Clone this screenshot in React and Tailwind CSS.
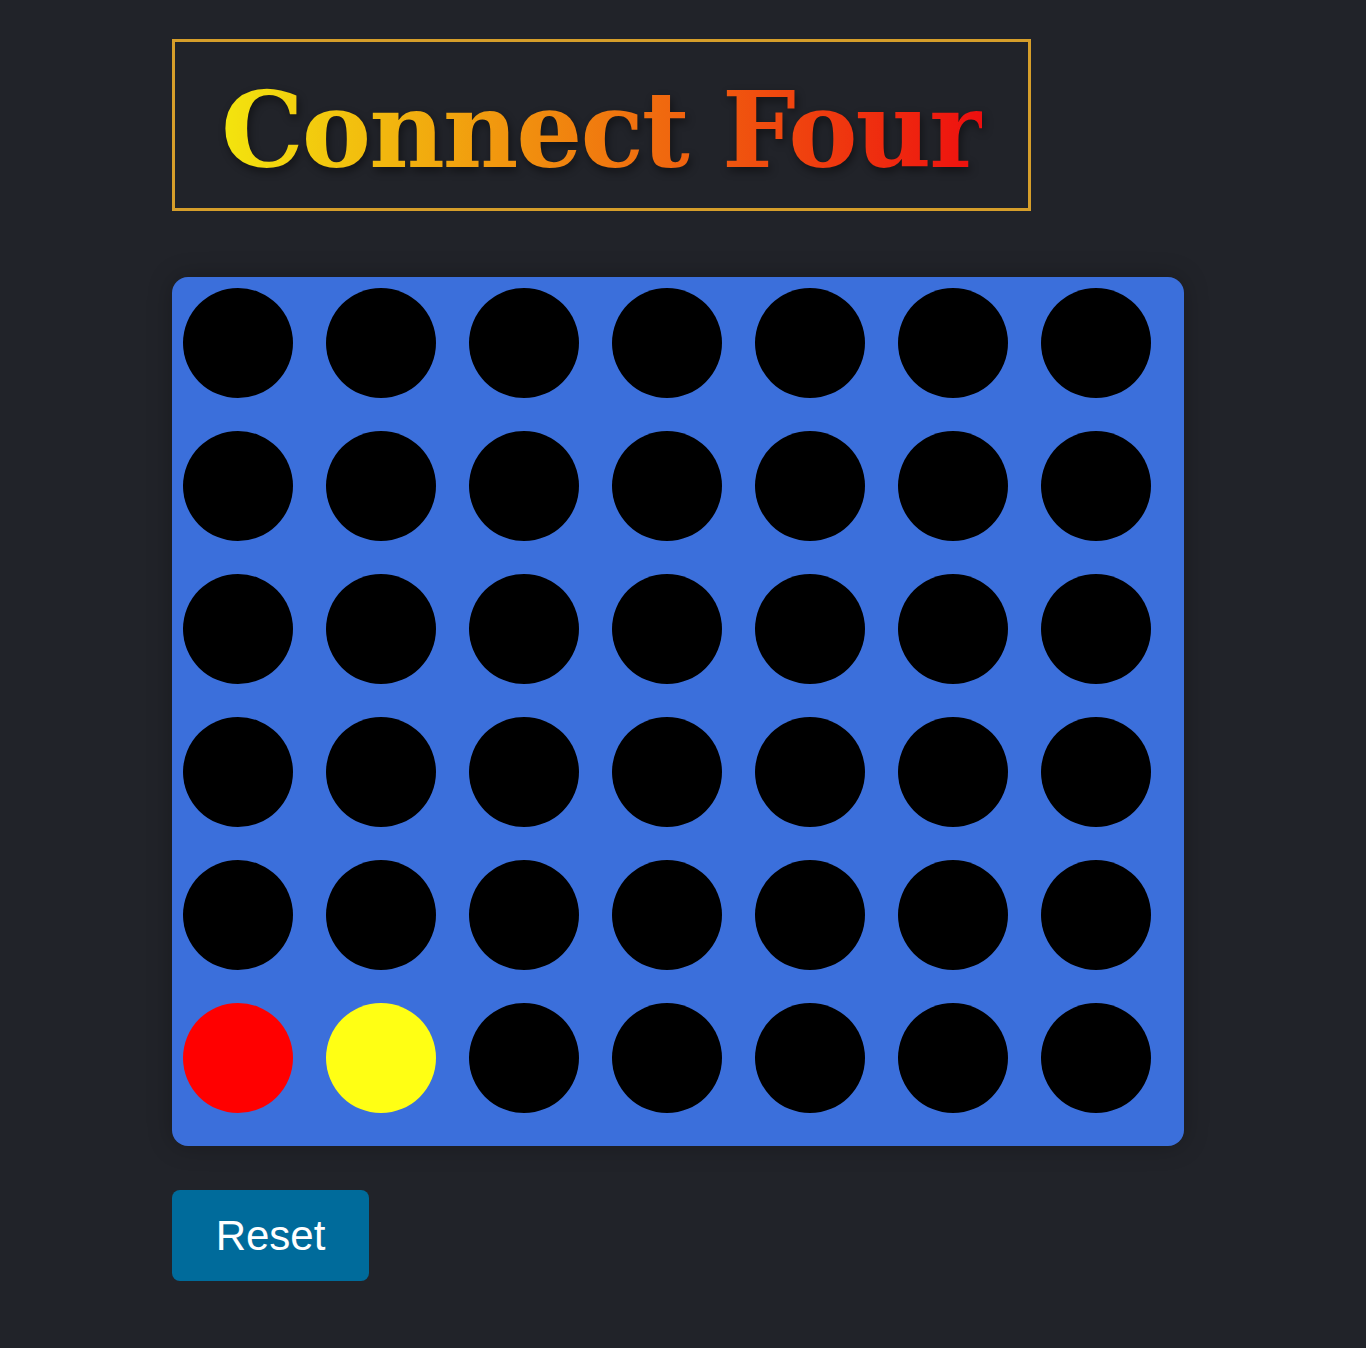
import React from "react";

const ROWS = 6;
const COLS = 7;

export default function App() {
  const board = Array.from({ length: ROWS }, (_, r) =>
    Array.from({ length: COLS }, (_, c) => {
      if (r === 5 && c === 0) return "red";
      if (r === 5 && c === 1) return "yellow";
      return null;
    })
  );
  return (
    <div className="min-h-[1348px] w-full bg-[#212329] pt-[39px] pl-[172px]">
      <div className="inline-block border-[3px] border-[#d69e2a] px-[46px] pt-[30px] pb-[18px]">
        <h1
          className="text-[104px] font-bold leading-[118px] tracking-[-2px] bg-[linear-gradient(to_right,#f3e50e,#ee0f0f)] bg-clip-text text-transparent"
          style={{ fontFamily: '"DejaVu Serif", serif', filter: "drop-shadow(2px 4px 4px rgba(0,0,0,0.45))" }}
        >
          Connect Four
        </h1>
      </div>
      <div className="mt-[66px] w-[1012px] rounded-[16px] bg-[#3b6fdb] pt-[11px] pl-[11px] shadow-[0_0_24px_rgba(0,0,0,0.25)]">
        {board.map((row, r) => (
          <div key={r} className="flex">
            {row.map((cell, c) => (
              <div
                key={c}
                className={
                  "mr-[33px] mb-[33px] h-[110px] w-[110px] rounded-full " +
                  (cell === "red" ? "bg-[#ff0000]" : cell === "yellow" ? "bg-[#ffff14]" : "bg-black")
                }
              />
            ))}
          </div>
        ))}
      </div>
      <button
        className="mt-[44px] flex h-[91px] w-[197px] items-center justify-center rounded-[8px] bg-[#006b9b] text-[42px] text-white"
        style={{ fontFamily: '"Liberation Sans", Arial, sans-serif' }}
      >
        Reset
      </button>
    </div>
  );
}
